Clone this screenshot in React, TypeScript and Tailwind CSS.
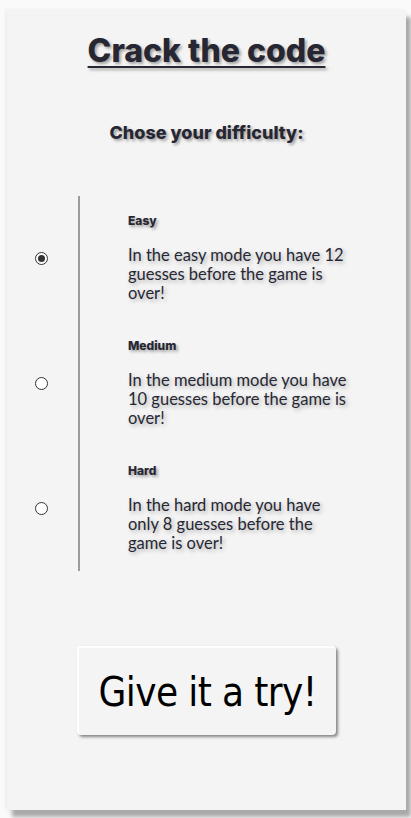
import React from "react";

type Level = {
  id: string;
  title: string;
  text: string;
  checked?: boolean;
};

const levels: Level[] = [
  { id: "easy", title: "Easy", text: "In the easy mode you have 12 guesses before the game is over!", checked: true },
  { id: "medium", title: "Medium", text: "In the medium mode you have 10 guesses before the game is over!" },
  { id: "hard", title: "Hard", text: "In the hard mode you have only 8 guesses before the game is over!" },
];

function Radio({ checked }: { checked?: boolean }) {
  return (
    <span className="flex h-[13px] w-[13px] items-center justify-center rounded-full border border-[#333] bg-white">
      {checked ? <span className="h-[7px] w-[7px] rounded-full bg-[#333]" /> : null}
    </span>
  );
}

export default function App() {
  return (
    <div className="min-h-screen bg-[#fafafa] pl-[7px] pt-[10px] font-['Lato','Liberation_Sans',sans-serif] text-[#272733]">
      <div className="flex h-[800px] w-[399px] flex-col bg-[#f4f4f4] pt-[22px] shadow-[5px_7px_4px_#a9a9a9,-1px_0_3px_rgba(0,0,0,0.08)]">
        <h1 className="text-center font-['Inter','Lato',sans-serif] text-[32px] leading-[38px] font-extrabold underline decoration-[2px] underline-offset-[4px] [text-shadow:2px_2px_3px_rgba(0,0,0,0.35)]">
          Crack the code
        </h1>
        <h2 className="mt-[52px] text-center font-['Inter','Lato',sans-serif] text-[18px] leading-[22px] font-extrabold [text-shadow:2px_2px_3px_rgba(0,0,0,0.35)]">
          Chose your difficulty:
        </h2>

        <div className="mt-[52px] flex flex-col">
          {levels.map((level) => (
            <label key={level.id} className="flex h-[125px]">
              <div className="flex w-[71px] justify-center pr-[2px] pt-[56px]">
                <Radio checked={level.checked} />
              </div>
              <div className="border-l-2 border-[#9c9c9c] pl-[48px] pt-[17px]">
                <div className="font-['Inter','Lato',sans-serif] text-[12px] leading-[15px] font-extrabold [text-shadow:2px_2px_3px_rgba(0,0,0,0.35)]">
                  {level.title}
                </div>
                <p className="mt-[18px] w-[222px] text-[16.5px] leading-[19px] [text-shadow:2px_2px_4px_rgba(0,0,0,0.3)]">
                  {level.text}
                </p>
              </div>
            </label>
          ))}
        </div>

        <div className="mt-[75px] flex justify-center">
          <button
            type="button"
            className="h-[89px] w-[259px] rounded-[4px] border-t-2 border-l-2 border-white bg-[#f4f4f4] font-['DejaVu_Sans_Condensed','DejaVu_Sans',sans-serif] text-[40px] tracking-[-0.6px] text-black shadow-[2px_2px_3px_rgba(0,0,0,0.45)]"
          >
            Give it a try!
          </button>
        </div>
      </div>
    </div>
  );
}
